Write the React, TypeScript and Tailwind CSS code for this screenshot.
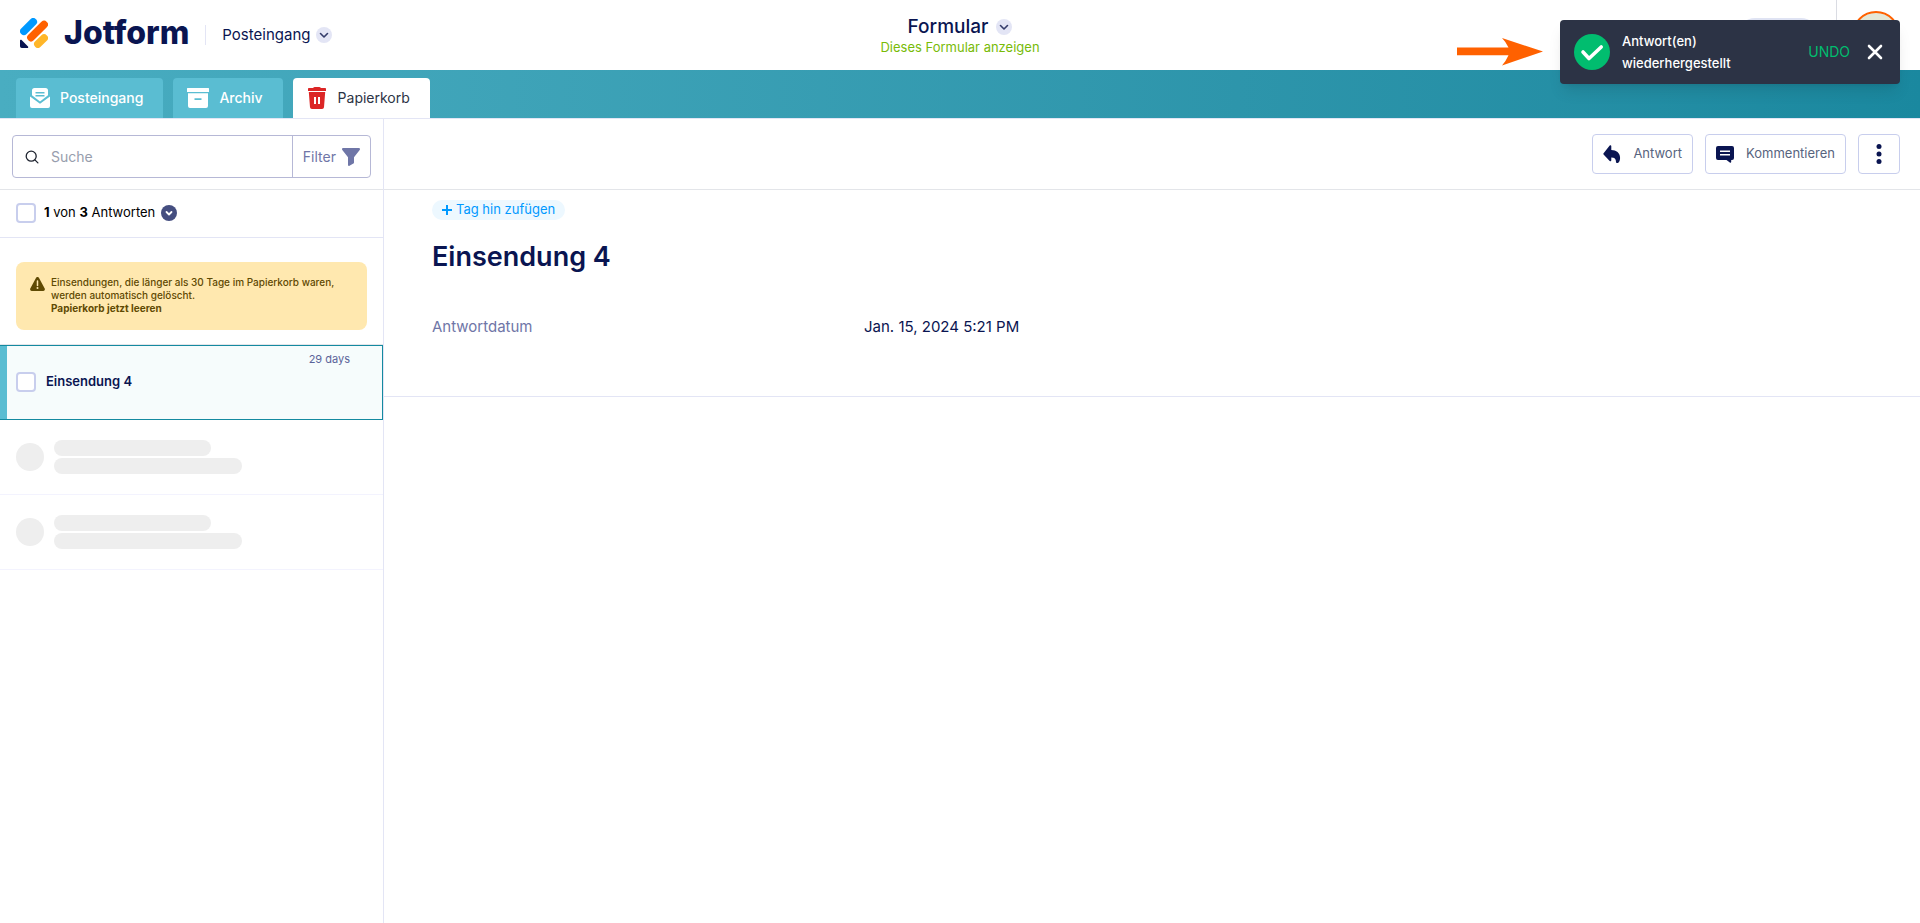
import { useState } from "react";
import type { ReactNode } from "react";

function ChevronBadge({ dark = false }: { dark?: boolean }) {
  return (
    <span
      className={
        dark
          ? "flex size-4 items-center justify-center rounded-full bg-[#454e80] text-white"
          : "flex size-4 items-center justify-center rounded-full bg-[#e3e5f5] text-[#343c6a]"
      }
    >
      <svg viewBox="0 0 16 16" className="size-4" fill="none" stroke="currentColor" strokeWidth={dark ? 1.8 : 1.6} strokeLinecap="round" strokeLinejoin="round">
        <path d={dark ? "M5.5 7 8 9.5 10.5 7" : "M4.5 6.5 8 10l3.5-3.5"} />
      </svg>
    </span>
  );
}

function JotformLogo() {
  return (
    <a href="#" className="flex items-center gap-4 pb-1 text-[#0a1551]">
      <svg viewBox="0 0 28 30" className="h-[30px] w-7" aria-hidden="true" strokeLinecap="round" strokeWidth="7.700">
        <path d="M3.900 13.200 13.200 3.900" stroke="#0099ff" />
        <path d="M11 19.600 24.100 6.600" stroke="#ff6100" />
        <path d="M17.900 26.100 24.100 20.100" stroke="#ffb629" />
        <path d="M0 22.800c0-.9 1-1.300 1.600-.7L8 28.400c.6.600.2 1.600-.7 1.600H1.800A1.800 1.800 0 0 1 0 28.200Z" fill="#0a1551" />
      </svg>
      <span className="text-[32px] leading-8 font-extrabold">Jotform</span>
    </a>
  );
}

function Tab({ active = false, icon, children }: { active?: boolean; icon: ReactNode; children: ReactNode }) {
  return (
    <button
      type="button"
      className={
        active
          ? "flex h-10 items-center gap-3 rounded-t bg-white pr-5 pl-[15px] text-sm text-[#2c3345]"
          : "flex h-10 items-center gap-2.5 rounded-t bg-[#5abdd2] pr-5 pl-3.5 text-sm font-medium text-white"
      }
    >
      {icon}
      {children}
    </button>
  );
}

function InboxIcon() {
  return (
    <svg viewBox="0 0 20 20" className="size-5" fill="currentColor" aria-hidden="true">
      <path d="M2 7.300V2.500A2.500 2.500 0 0 1 4.500 0h11A2.500 2.500 0 0 1 18 2.500v4.800l-8 6.300ZM5.500 4v1.500h9V4Zm0 3v1.500h9V7Z" fillRule="evenodd" />
      <path d="M0 8.500 10 15.800 20 8.500V18a2 2 0 0 1-2 2H2a2 2 0 0 1-2-2Z" />
    </svg>
  );
}

function ArchiveIcon() {
  return (
    <svg viewBox="0 0 22 20" className="h-5 w-[22px]" fill="currentColor" aria-hidden="true">
      <path d="M.6 0h20.800a.6.6 0 0 1 .6.600V4H0V.6A.6.6 0 0 1 .6 0Z" />
      <path fillRule="evenodd" d="M1 5.200h20V18a2 2 0 0 1-2 2H3a2 2 0 0 1-2-2ZM7.500 10.200v1.700h7v-1.700Z" />
    </svg>
  );
}

function TrashIcon() {
  return (
    <svg viewBox="0 0 18 22" className="h-[22px] w-[18px]" fill="#dc2626" aria-hidden="true">
      <path d="M0 1.700Q0 1 .8 1H5q.8-1 1.800-1h4.400q1 0 1.800 1h4.200q.8 0 .8.700V4H0Z" />
      <path fillRule="evenodd" d="M.8 5h16.400L16 20.200a2 2 0 0 1-2 1.800H4a2 2 0 0 1-2-1.800ZM6 10v7h2v-7Zm4 0v7h2v-7Z" />
    </svg>
  );
}

function Checkbox({ label }: { label: string }) {
  return (
    <input
      type="checkbox"
      aria-label={label}
      className="size-5 shrink-0 appearance-none rounded border-2 border-[#c8ceed] bg-white checked:bg-[#5abdd2]"
    />
  );
}

function SkeletonRow() {
  return (
    <div className="flex h-[75px] items-center gap-2.5 border-b border-[#f3f3fe] pl-4" aria-hidden="true">
      <div className="size-7 rounded-full bg-[#eeeeee]" />
      <div className="flex flex-col gap-0.5">
        <div className="h-4 w-[157px] rounded-full bg-[#eeeeee]" />
        <div className="h-4 w-[188px] rounded-full bg-[#eeeeee]" />
      </div>
    </div>
  );
}

function Header() {
  return (
    <header className="grid h-[70px] grid-cols-[1fr_auto_1fr] bg-white">
      <div className="flex items-center pl-5">
        <JotformLogo />
        <span className="ml-4 h-5 w-px bg-[#e3e5f5]" />
        <button type="button" className="ml-4 flex items-center gap-1.5 text-[15px] text-[#0a1551]">
          Posteingang
          <ChevronBadge />
        </button>
      </div>
      <div className="flex flex-col items-center pt-[15px]">
        <button type="button" className="flex items-center gap-2 text-[19px] leading-6 font-medium text-[#0a1551]">
          Formular
          <ChevronBadge />
        </button>
        <a href="#" className="text-[13px] leading-4 text-[#78bb07]">
          Dieses Formular anzeigen
        </a>
      </div>
      <div className="flex items-center justify-end pr-5">
        <span className="mr-[18px] h-[34px] w-20 rounded-full bg-[#dfe3f3]" />
        <span className="h-full w-px bg-[#dadce3]" />
        <span className="ml-[15px] size-12 rounded-full border-2 border-[#ff6100] bg-[#e4e7d6]" />
      </div>
    </header>
  );
}

function Toast() {
  const [open, setOpen] = useState(true);
  if (!open) return null;
  return (
    <div className="absolute top-5 right-5 z-10 flex items-center gap-4">
      <svg viewBox="0 0 87 28" className="h-7 w-[87px]" fill="#ff6100" aria-hidden="true">
        <path d="M0 9.600h51.500Q49 4 45 0L86 13.600 45 27.400Q49 23 51.500 17.200H0Z" />
      </svg>
      <div role="status" className="flex h-16 w-[340px] items-center rounded bg-[#2c3345] pr-4 pl-3.5 text-white shadow-lg">
        <svg viewBox="0 0 36 36" className="size-9 shrink-0" aria-hidden="true">
          <circle cx="18" cy="18" r="18" fill="#01bd6f" />
          <path d="m9 18 6 6.500L27.200 13" fill="none" stroke="#fff" strokeWidth="3.600" strokeLinecap="round" strokeLinejoin="round" />
        </svg>
        <p className="ml-3 flex-1 text-[13px] leading-[22px] font-medium">
          Antwort(en)
          <br />
          wiederhergestellt
        </p>
        <button type="button" className="text-sm text-[#01bd6f]">UNDO</button>
        <button type="button" aria-label="Schließen" onClick={() => setOpen(false)} className="ml-4">
          <svg viewBox="0 0 18 18" className="size-[18px]" stroke="currentColor" strokeWidth="2.600" strokeLinecap="round">
            <path d="m3 3 12 12M15 3 3 15" />
          </svg>
        </button>
      </div>
    </div>
  );
}

function Sidebar() {
  return (
    <aside className="w-96 shrink-0 border-r border-[#e3e5f5]">
      <div className="border-b border-[#e3e5e9] px-3 pt-4 pb-[11px]">
        <div className="flex h-[43px] w-full rounded border border-[#b6b8d6]">
          <label className="flex min-w-0 flex-1 items-center gap-3 pl-3">
            <svg viewBox="0 0 14 14" className="size-3.5 shrink-0" fill="none" stroke="#1f2430" strokeWidth="1.300" strokeLinecap="round" aria-hidden="true">
              <circle cx="6.200" cy="6.200" r="5" />
              <path d="m9.900 9.900 3 3" />
            </svg>
            <input type="search" placeholder="Suche" aria-label="Suche" className="w-full min-w-0 bg-transparent text-sm outline-none placeholder:text-[#979dad]" />
          </label>
          <button type="button" className="flex items-center gap-1.5 border-l border-[#b6b8d6] px-2.5 text-sm text-[#6f76a7]">
            Filter
            <svg viewBox="0 0 18 18" className="size-[18px]" fill="currentColor" aria-hidden="true">
              <path d="M1.200 0h15.600C17.800 0 18.300 1.200 17.700 2L12 9.200v5.200q0 .7-.6 1.100L7.500 17.800c-.7.500-1.500.1-1.500-.7V9.200L.3 2C-.3 1.200.2 0 1.200 0Z" />
            </svg>
          </button>
        </div>
      </div>
      <div className="flex h-12 items-center border-b border-[#e3e5f5] pb-0.5 pl-4">
        <Checkbox label="Alle Antworten auswählen" />
        <button type="button" className="ml-2 flex items-center gap-1.5 text-[13px] text-black">
          <span>
            <b>1</b> von <b>3</b> Antworten
          </span>
          <ChevronBadge dark />
        </button>
      </div>
      <div className="border-b border-[#e3e5e9] px-4 pt-6 pb-3.5">
        <div className="flex h-[68px] items-start gap-1.5 rounded-lg bg-[#ffe8af] pt-3.5 pl-3.5 text-[10px] leading-[13px] font-medium text-[#5f4a03]">
          <svg viewBox="0 0 15 14" className="mt-px h-3.5 w-[15px] shrink-0" aria-hidden="true">
            <path d="M6.100.8a1.600 1.600 0 0 1 2.800 0l5.800 10.800c.6 1-.2 2.400-1.400 2.400H1.700C.5 14-.3 12.600.3 11.600Z" fill="#5f4a03" />
            <path d="M7.500 4v4.500" stroke="#ffe8af" strokeWidth="1.500" strokeLinecap="round" />
            <circle cx="7.500" cy="11" r="1" fill="#ffe8af" />
          </svg>
          <div>
            <p>
              Einsendungen, die länger als 30 Tage im Papierkorb waren,
              <br />
              werden automatisch gelöscht.
            </p>
            <button type="button" className="block font-bold">Papierkorb jetzt leeren</button>
          </div>
        </div>
      </div>
      <div className="relative flex h-[75px] items-center gap-2.5 border-y border-r border-[#148aa0] bg-[#f6fcfc] pb-0.5 pl-4">
        <span className="absolute inset-y-0 left-0 w-[7px] bg-[#5abdd2]" />
        <Checkbox label="Einsendung 4 auswählen" />
        <span className="text-[13px] font-semibold text-[#0a1551]">Einsendung 4</span>
        <span className="absolute top-1 right-8 text-[11px] leading-[18px] text-[#5a6399]">29 days</span>
      </div>
      <SkeletonRow />
      <SkeletonRow />
    </aside>
  );
}

function ToolButton({ icon, children }: { icon: ReactNode; children: ReactNode }) {
  return (
    <button type="button" className="flex h-10 items-center gap-3 rounded border border-[#c8ceed] px-2.5 text-[13px] text-[#57647e]">
      {icon}
      {children}
    </button>
  );
}

function Detail() {
  return (
    <main className="min-w-0 flex-1">
      <div className="flex h-[71px] items-start justify-end gap-3 border-b border-[#e3e5e9] pt-[15px] pr-5">
        <ToolButton
          icon={
            <svg viewBox="0 0 18 18" className="size-[18px]" fill="#0a1551" aria-hidden="true">
              <path d="M8.300 1.200v3.900c5.400.2 9.300 3.200 8.700 8.900-.1 1.500-.8 3-1.700 3.700-.8.600-2.300.3-2.300-.8 0-3-1.400-4.300-4.700-4.400v2.700c0 1-.9 1.300-1.600.7L.8 9.700a1.200 1.200 0 0 1 0-1.800L6.700.6c.7-.8 1.600-.4 1.600.6Z" />
            </svg>
          }
        >
          Antwort
        </ToolButton>
        <ToolButton
          icon={
            <svg viewBox="0 0 18 18" className="size-[18px]" aria-hidden="true">
              <path d="M2 1h14a2 2 0 0 1 2 2v10a2 2 0 0 1-2 2h-.8v2c0 .8-.8 1-1.400.6L10.500 15H2a2 2 0 0 1-2-2V3a2 2 0 0 1 2-2Z" fill="#0a1551" />
              <path d="M4 6.200h10M4 9.800h10" stroke="#fff" strokeWidth="1.500" />
            </svg>
          }
        >
          Kommentieren
        </ToolButton>
        <button type="button" aria-label="Mehr" className="flex h-10 w-[42px] items-center justify-center rounded border border-[#c8ceed]">
          <svg viewBox="0 0 6 20" className="h-5 w-1.5" fill="#0a1551">
            <circle cx="3" cy="2.500" r="2.500" />
            <circle cx="3" cy="10" r="2.500" />
            <circle cx="3" cy="17.500" r="2.500" />
          </svg>
        </button>
      </div>
      <section className="h-[207px] border-b border-[#e3e5f5] pt-2.5 pl-12">
        <button type="button" className="flex h-5 items-center gap-1 rounded-full bg-[#edf8ff] px-2.5 text-[13px] text-[#0099ff]">
          <svg viewBox="0 0 10 10" className="size-2.5" stroke="currentColor" strokeWidth="2" aria-hidden="true">
            <path d="M5 0v10M0 5h10" />
          </svg>
          Tag hin zufügen
        </button>
        <h1 className="mt-[21px] text-[27px] leading-8 font-semibold text-[#0a1551]">Einsendung 4</h1>
        <dl className="mt-11 grid grid-cols-[432px_1fr] text-[15px] leading-5">
          <dt className="text-[#6f76a7]">Antwortdatum</dt>
          <dd className="text-[#0a1551]">Jan. 15, 2024 5:21 PM</dd>
        </dl>
      </section>
    </main>
  );
}

export default function App() {
  return (
    <div className="relative flex min-h-screen flex-col bg-white font-['Inter','Liberation_Sans',sans-serif]">
      <Header />
      <Toast />
      <nav className="flex h-12 items-end gap-2.5 bg-linear-to-r from-[#49adc1] to-[#1a889f] px-4">
        <Tab icon={<InboxIcon />}>Posteingang</Tab>
        <Tab icon={<ArchiveIcon />}>Archiv</Tab>
        <Tab active icon={<TrashIcon />}>Papierkorb</Tab>
      </nav>
      <div className="flex flex-1 border-t border-[#e3e5f5]">
        <Sidebar />
        <Detail />
      </div>
    </div>
  );
}
